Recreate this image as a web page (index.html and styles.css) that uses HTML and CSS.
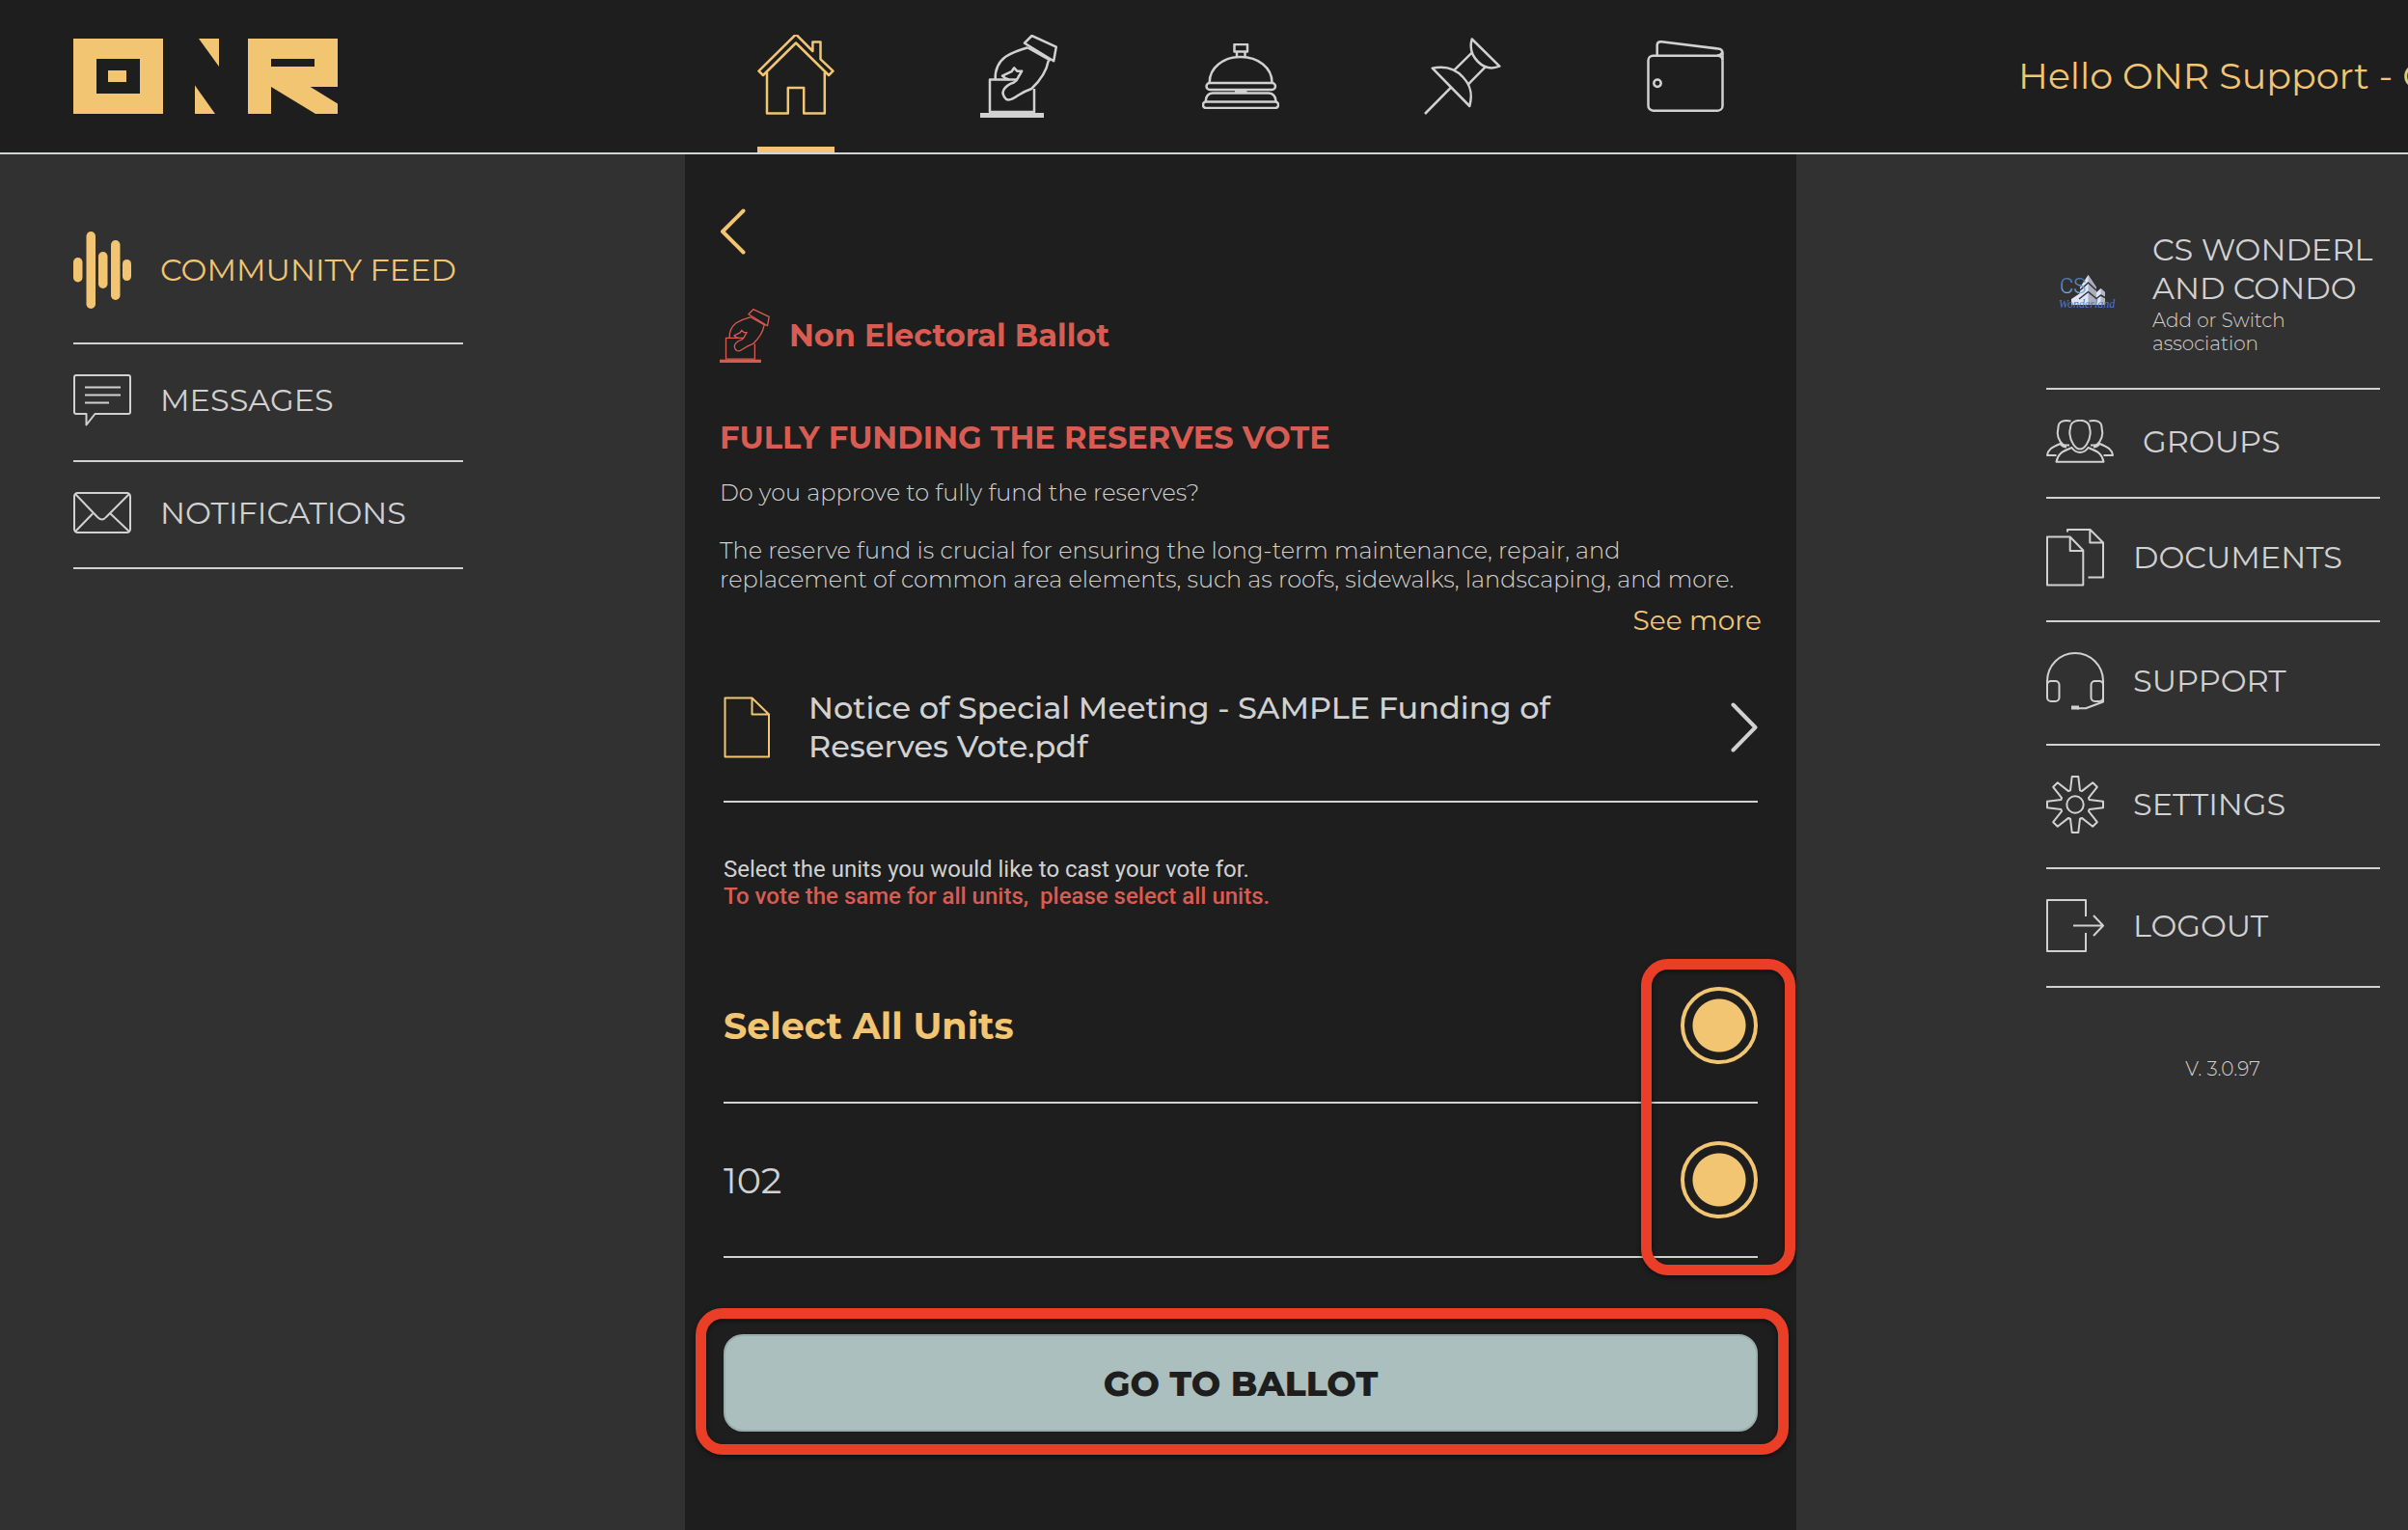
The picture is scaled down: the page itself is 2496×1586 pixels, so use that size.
FILE: index.html
```html
<!DOCTYPE html>
<html lang="en">
<head>
    <meta charset="UTF-8">
    <meta name="viewport" content="width=device-width, initial-scale=1.0">
    <title>ONR - Non Electoral Ballot</title>
    <link rel="stylesheet" href="styles.css">
</head>
<body>
    <!-- shared by the top nav and the ballot title -->
    <svg class="symbols" width="0" height="0" aria-hidden="true">
        <symbol id="ballot" viewBox="0 0 80 86">
            <rect x="0" y="81" width="66" height="5" fill="currentColor" stroke="none"/>
            <path d="M38 46.5H10V80H56V56"/>
            <path d="M49.5 13.3Q36 17 26.4 22.7Q15 31 15.7 46.5"/>
            <path d="M70.8 26.7Q68 42 53.2 56Q45 59 39 63Q31 69 27 66.8Q22 62 24.3 57.3Q27 52 35 49.5Q38 48 39.5 44L43.2 37.7L38.5 37.8L35.2 34.3L32.5 38.2L23 42.7Q26 46 30 46.5"/>
            <path d="M53.6 1L78.8 12.7L76.2 27.2L46 8.7Z"/>
            <path d="M49.4 13.3L73 26.6"/>
        </symbol>
    </svg>

    <header class="header">
        <a href="#" class="logo" aria-label="ONR home">
            <svg width="274" height="78" viewBox="0 0 274 78">
                <g fill="#f2c572">
                    <rect width="93" height="78"/>
                    <path d="M130 0H151V29Z"/>
                    <path d="M126 48.5L147 78H126Z"/>
                    <rect x="181" width="93" height="50"/>
                    <rect x="181" width="24" height="78"/>
                    <path d="M205 50L251 78H274V67.5L244 49Z"/>
                </g>
                <rect x="24" y="21" width="45" height="36" fill="#1e1e1e"/>
                <rect x="36" y="33" width="19" height="12" fill="#f2c572"/>
                <rect x="205" y="21" width="45" height="8" fill="#1e1e1e"/>
            </svg>
        </a>

        <nav class="top-nav">
            <a href="#" class="top-link active" aria-label="Home">
                <svg width="80" height="86" viewBox="0 2 80 86">
                    <path d="M40 1.5L57.4 19V9.5H65.5V27.3L78.5 39.7L74 44L40 10.5L6 44L1.5 39.7Z"/>
                    <path d="M10 41V83.5H31.8V57H48.2V83.5H69.8V41"/>
                </svg>
            </a>
            <a href="#" class="top-link" aria-label="Ballots">
                <svg width="80" height="86"><use href="#ballot"/></svg>
            </a>
            <a href="#" class="top-link" aria-label="Concierge">
                <svg width="80" height="68" viewBox="0 0 80 68">
                    <rect x="33.5" y="1" width="13.5" height="7.5"/>
                    <path d="M36 8.5V14M44.5 8.5V14"/>
                    <path d="M7.7 40.5C7.7 25 22 14 40 14S72.5 25 72.5 40.5"/>
                    <rect x="4.5" y="41" width="71.5" height="7" rx="3.5"/>
                    <path d="M34 50H46.5"/>
                    <path d="M3.8 60Q4 52 11 51.5H69Q76 52 76.5 60"/>
                    <rect x="1" y="60.5" width="78" height="6.5" rx="3"/>
                </svg>
            </a>
            <a href="#" class="top-link" aria-label="Notice board">
                <svg width="80" height="80" viewBox="0 0 80 80">
                    <path d="M1 79L28 51.7"/>
                    <path d="M8.7 31.7L47.3 71C50.5 59 49 50 40.5 41C32 31.5 21 29 8.7 31.7Z"/>
                    <path d="M49.7 1.5L78.3 29.7C70 33 62 31 56 25C50 19 47 11 49.7 1.5Z"/>
                    <path d="M31.7 33.3L50 15.3M46 48.3L63.7 30.3"/>
                </svg>
            </a>
            <a href="#" class="top-link" aria-label="Payments">
                <svg width="80" height="74" viewBox="0 0 80 74">
                    <rect x="1.5" y="15.7" width="77" height="57" rx="5"/>
                    <path d="M10.7 15.5V4.5Q11 1 15 1.2L74 8.5Q78.5 9 78.5 13V20"/>
                    <path d="M73 15.5Q77 15.5 78.3 12"/>
                    <circle cx="11" cy="44.3" r="3.7"/>
                </svg>
            </a>
        </nav>

        <p class="hello">Hello ONR Support - C</p>
    </header>

    <div class="page">
        <aside class="sidebar left">
            <nav>
                <a href="#" class="side-link active">
                    <svg width="60" height="80" viewBox="0 0 60 80">
                        <g fill="currentColor" stroke="none">
                            <rect x="0" y="27" width="9.5" height="25.5" rx="4.7"/>
                            <rect x="13.5" y="0" width="9.5" height="80" rx="4.7"/>
                            <rect x="26" y="21" width="9.5" height="38" rx="4.7"/>
                            <rect x="39" y="9" width="9.5" height="62" rx="4.7"/>
                            <rect x="51" y="29" width="9" height="22" rx="4.5"/>
                        </g>
                    </svg>
                    COMMUNITY FEED
                </a>
                <a href="#" class="side-link">
                    <svg width="60" height="54" viewBox="0 0 60 54">
                        <path d="M3 1H57Q59 1 59 3V39Q59 41 57 41H22.5L13.5 52.5V41H3Q1 41 1 39V3Q1 1 3 1Z"/>
                        <path d="M12 13.5H49M12 21.5H49M12 29.5H37"/>
                    </svg>
                    MESSAGES
                </a>
                <a href="#" class="side-link">
                    <svg width="60" height="43" viewBox="0 0 60 43">
                        <rect x="1" y="1" width="58" height="41" rx="3.5"/>
                        <path d="M2 2L25 26Q30 31 34 26L58 2M2 41L20 22.5M58 41L38.5 22.5"/>
                    </svg>
                    NOTIFICATIONS
                </a>
            </nav>
        </aside>

        <main class="content">
            <button class="back" aria-label="Back">
                <svg width="27" height="48" viewBox="0 0 27 48"><path d="M24.5 2.5L3 24L24.5 45.5"/></svg>
            </button>

            <div class="ballot-type">
                <svg width="52" height="56"><use href="#ballot"/></svg>
                <h2>Non Electoral Ballot</h2>
            </div>

            <h1>FULLY FUNDING THE RESERVES VOTE</h1>
            <div class="description">
                <p>Do you approve to fully fund the reserves?</p>
                <p>The reserve fund is crucial for ensuring the long-term maintenance, repair, and replacement of common area elements, such as roofs, sidewalks, landscaping, and more.</p>
            </div>
            <a href="#" class="see-more">See more</a>

            <form class="vote">
                <a href="#" class="attachment">
                    <svg class="file" width="48" height="64" viewBox="0 0 48 64">
                        <path d="M1.5 1.5H29.5L47 18.5V62.5H1.5ZM29.5 1.5V18.5H47"/>
                    </svg>
                    <span>Notice of Special Meeting - SAMPLE Funding of Reserves Vote.pdf</span>
                    <svg class="arrow" width="28" height="52" viewBox="0 0 28 52"><path d="M2.5 2.5L25.5 26L2.5 49.5"/></svg>
                </a>

                <p class="hint">Select the units you would like to cast your vote for.</p>
                <p class="hint warn">To vote the same for all units,&nbsp; please select all units.</p>

                <div class="units">
                    <div class="unit all">
                        <label for="unit-all">Select All Units</label>
                        <input type="checkbox" id="unit-all" checked>
                    </div>
                    <div class="unit">
                        <label for="unit-102">102</label>
                        <input type="checkbox" id="unit-102" checked>
                    </div>
                    <div class="mark mark-units"></div>
                </div>

                <div class="submit">
                    <button type="button">GO TO BALLOT</button>
                    <div class="mark mark-submit"></div>
                </div>
            </form>
        </main>

        <aside class="sidebar right">
            <nav>
                <a href="#" class="association">
                    <svg width="62" height="38" viewBox="0 0 62 38">
                        <defs>
                            <linearGradient id="cs" x1="0" y1="0" x2="0" y2="1">
                                <stop offset="0" stop-color="#3f6ea8"/>
                                <stop offset="1" stop-color="#8fbdec"/>
                            </linearGradient>
                        </defs>
                        <path d="M31.5 0L40 13V31H14V25L23 19V13Z" fill="#dfe5f8" stroke="none"/>
                        <path d="M31.5 0L40 13V31H31.5Z" fill="#a9adbd" stroke="none"/>
                        <path d="M40 18L44.5 14L49 18V31H40Z" fill="#dfe5f8" stroke="none"/>
                        <path d="M44.5 14L49 18V31H44.5Z" fill="#b3b7c6" stroke="none"/>
                        <path d="M23 16L31.5 8L40 16M22 25L31.5 17.5L40 24.5L44.5 21L49 23.5" stroke="#313131" stroke-width="1.5"/>
                        <text class="logo-cs" x="2" y="19" fill="url(#cs)">CS</text>
                        <text class="logo-name" x="1" y="34">Wonderland</text>
                    </svg>
                    <span class="association-name">
                        CS WONDERL<br>AND CONDO
                        <small>Add or Switch association</small>
                    </span>
                </a>
                <a href="#" class="side-link">
                    <svg width="70" height="45" viewBox="0 0 70 45">
                        <path d="M35 .8C29 .8 25 4 25 9Q24 12 24.5 15.5C25 22 30 30.5 35 30.5S45 22 45.5 15.5Q46 12 45 9C45 4 41 .8 35 .8Z"/>
                        <path d="M10.5 43.7C12 36 15 33.5 26.5 29Q30 34 35 34T43.5 29C55 33.5 58 36 59.5 43.7Z"/>
                        <path d="M25.5 1.5C18 0 12.5 2 12.5 8L11.7 14C12 20 16 26.5 20 26.5H24M10.5 37H1C2 31 5 29 14.5 25Q17 28.5 21 28.5"/>
                        <path d="M44.5 1.5C52 0 57.5 2 57.5 8L58.3 14C58 20 54 26.5 50 26.5H46M59.5 37H69C68 31 65 29 55.5 25Q53 28.5 49 28.5"/>
                    </svg>
                    GROUPS
                </a>
                <a href="#" class="side-link">
                    <svg width="60" height="60" viewBox="0 0 60 60">
                        <path d="M1 8.5H24.7L38.3 22.5V58.5H1ZM24.7 8.5V23H38.3"/>
                        <path d="M22 3.5V1H45.5L59 14.5V50.5H43.5M45.3 1V14.5H59"/>
                    </svg>
                    DOCUMENTS
                </a>
                <a href="#" class="side-link">
                    <svg width="60" height="60" viewBox="0 0 60 60">
                        <path d="M1 36V30A29 29 0 0 1 59 30V51.5L41 58.3H32"/>
                        <rect x="1" y="30" width="12.5" height="21" rx="4"/>
                        <rect x="46.5" y="30" width="12.5" height="21" rx="4"/>
                        <rect x="26" y="55.5" width="8" height="4" fill="currentColor" stroke="none"/>
                    </svg>
                    SUPPORT
                </a>
                <a href="#" class="side-link">
                    <svg width="60" height="60" viewBox="0 0 60 60">
                        <circle cx="30" cy="30" r="8.7"/>
                        <path d="M25 15.3L26.7 1H33.3L35 15.3L36.9 16.1L48.2 7.2L52.8 11.8L43.9 23.1L44.7 25L59 26.7V33.3L44.7 35L43.9 36.9L52.8 48.2L48.2 52.8L36.9 43.9L35 44.7L33.3 59H26.7L25 44.7L23.1 43.9L11.8 52.8L7.2 48.2L16.1 36.9L15.3 35L1 33.3V26.7L15.3 25L16.1 23.1L7.2 11.8L11.8 7.2L23.1 16.1Z"/>
                    </svg>
                    SETTINGS
                </a>
                <a href="#" class="side-link">
                    <svg width="60" height="55" viewBox="0 0 60 55">
                        <path d="M41 18V1H1V54H41V35"/>
                        <path d="M28 27.5H59M49 17L59 27.5L49 38"/>
                    </svg>
                    LOGOUT
                </a>
            </nav>
            <p class="version">V. 3.0.97</p>
        </aside>
    </div>
</body>
</html>
```
FILE: styles.css
```css
* {
    box-sizing: border-box;
}

body,
h1,
h2,
p {
    margin: 0;
}

body {
    min-height: 100vh;
    display: flex;
    flex-direction: column;
    overflow-x: hidden;
    background-color: #313131;
    color: #d1d1d1;
    font-family: Montserrat, Inter, sans-serif;
    font-size: 32px;
}

a {
    color: inherit;
    text-decoration: none;
}

svg {
    flex: none;
    fill: none;
    stroke: currentColor;
    stroke-width: 2;
    stroke-linejoin: round;
}

.symbols {
    position: absolute;
}

/* header */
.header,
.page {
    display: grid;
    grid-template-columns: 355fr 576fr 317fr;
}

.header {
    height: 160px;
    background-color: #1e1e1e;
    border-bottom: 2px solid #d1d5d3;
}

.logo {
    align-self: center;
    padding-left: 76px;
}

.logo svg {
    display: block;
    stroke: none;
}

.top-nav {
    display: grid;
    grid-template-columns: repeat(5, 1fr);
    justify-items: center;
}

.top-link {
    width: 80px;
    display: flex;
    align-items: center;
    border-bottom: 6px solid transparent;
    padding-top: 6px;
}

.top-link svg {
    stroke-width: 2.5;
}

.top-link.active {
    color: #f2c572;
    border-bottom-color: #f2c572;
}

.hello {
    align-self: center;
    min-width: 0;
    padding-left: 230px;
    overflow: hidden;
    white-space: nowrap;
    font-size: 38px;
    line-height: 48px;
    color: #f2c572;
}

/* side columns */
.page {
    flex: 1;
}

.left {
    padding: 49px 230px 0 76px;
}

.right {
    padding: 49px 29px 0 259px;
}

.side-link {
    display: flex;
    align-items: center;
    gap: 30px;
    padding: 31px 0 35px;
    border-bottom: 2px solid #d1d1d1;
    line-height: 38px;
}

.side-link.active {
    color: #f2c572;
    border-bottom-color: #d1d1d1;
}

.association {
    display: flex;
    align-items: center;
    gap: 36px;
    padding: 30px 0 34px 12px;
    border-bottom: 2px solid #d1d1d1;
    line-height: 40px;
}

.association small {
    display: block;
    margin-top: 1px;
    font-size: 20px;
    font-weight: 300;
    line-height: 24px;
}

.logo-cs {
    font: 300 22px Roboto, sans-serif;
    stroke: none;
}

.logo-name {
    font: italic 12px "Liberation Serif", serif;
    fill: #4f78d0;
    stroke: none;
}

.version {
    padding: 72px 0 0 20px;
    text-align: center;
    font-size: 20px;
    font-weight: 300;
    line-height: 24px;
}

/* ballot */
.content {
    padding: 56px 36px 60px;
    background-color: #1e1e1e;
}

.back {
    display: block;
    padding: 0;
    border: none;
    background: none;
    color: #f2c572;
    cursor: pointer;
}

.back svg,
.arrow {
    display: block;
    stroke-width: 4;
    stroke-linecap: round;
}

.ballot-type {
    display: flex;
    align-items: center;
    gap: 20px;
    margin-top: 56px;
    color: #d95c52;
}

.ballot-type h2,
.content h1 {
    font-size: 32px;
    font-weight: 700;
    line-height: 40px;
}

.content h1 {
    margin-top: 58px;
    color: #d95c52;
}

.description {
    margin-top: 22px;
    font-size: 24px;
    font-weight: 300;
    line-height: 30px;
}

.description p + p {
    margin-top: 30px;
}

.see-more {
    display: block;
    width: fit-content;
    margin: 12px 0 0 auto;
    font-size: 28px;
    line-height: 30px;
    color: #f2c572;
}

.vote {
    padding: 0 4px;
}

.attachment {
    display: flex;
    align-items: center;
    margin-top: 56px;
    padding-bottom: 36px;
    border-bottom: 2px solid #d1d1d1;
    font-weight: 500;
    line-height: 40px;
}

.attachment span {
    flex: 1;
    padding: 0 180px 0 40px;
}

.file {
    color: #f2c572;
}

.hint {
    margin-top: 55px;
    font-family: Roboto, sans-serif;
    font-size: 24px;
    line-height: 28px;
}

.hint.warn {
    margin-top: 0;
    font-weight: 500;
    color: #d95c52;
}

.units {
    position: relative;
    margin-top: 41px;
}

.unit {
    display: flex;
    align-items: center;
    justify-content: space-between;
    height: 160px;
    border-bottom: 2px solid #d1d1d1;
    font-size: 38px;
}

.unit.all {
    font-weight: 700;
    color: #f2c572;
}

.unit input {
    appearance: none;
    width: 80px;
    height: 80px;
    margin: 0;
    border: 4px solid #f2c572;
    border-radius: 50%;
}

.unit input:checked {
    background: radial-gradient(circle closest-side, #f2c572 27px, transparent 28px) border-box;
}

.submit {
    position: relative;
    margin-top: 79px;
}

.submit button {
    display: block;
    width: 100%;
    height: 101px;
    border: 2px solid #98adac;
    border-radius: 20px;
    background-color: #abc0be;
    color: #1e1e1e;
    font-family: inherit;
    font-size: 36px;
    font-weight: 800;
    cursor: pointer;
}

/* red highlight frames */
.mark {
    position: absolute;
    border: 11px solid #ea3f26;
    border-radius: 28px;
    box-shadow: 0 2px 5px rgba(0, 0, 0, .5), inset 0 2px 5px rgba(0, 0, 0, .5);
    pointer-events: none;
}

.mark-units {
    top: 10px;
    right: -39px;
    bottom: -18px;
    width: 160px;
}

.mark-submit {
    top: -27px;
    right: -32px;
    bottom: -24px;
    left: -29px;
}
```
